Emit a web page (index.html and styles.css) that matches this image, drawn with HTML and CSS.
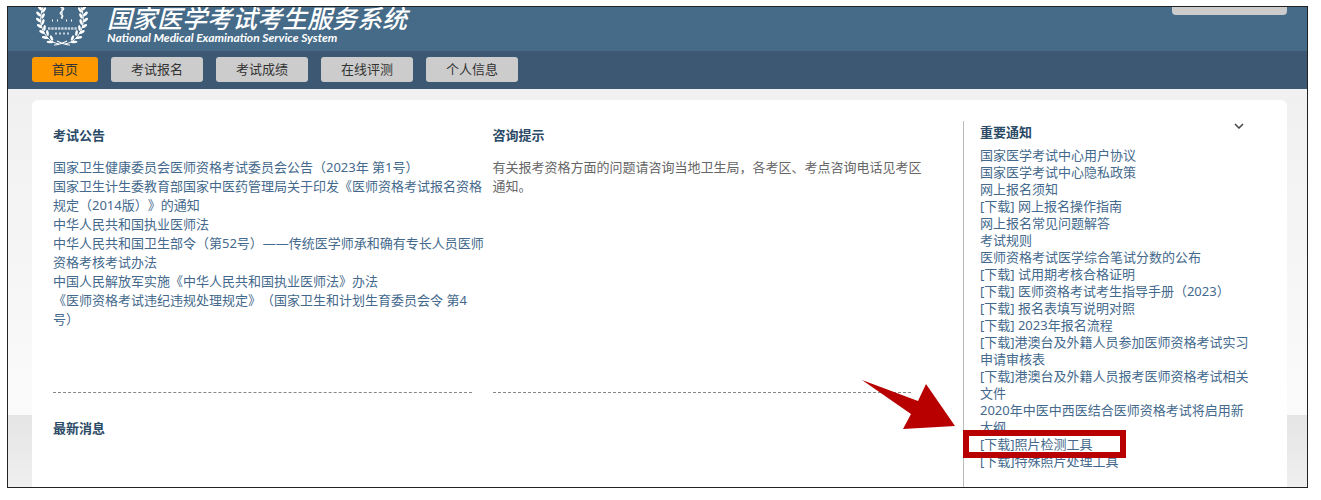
FILE: index.html
```html
<!DOCTYPE html>
<html lang="zh-CN">
<head>
<meta charset="utf-8">
<title>国家医学考试考生服务系统</title>
<link rel="stylesheet" href="styles.css">
</head>
<body>
<div class="frame">
  <header class="banner">
    <svg class="emblem" viewBox="0 0 52 40" aria-hidden="true">
      <defs>
        <g id="branch" fill="#fff">
          <path d="M7 0C3 10 4 22 11 30C14 34 18 36 23 37" fill="none" stroke="#fff" stroke-width="1"/>
          <ellipse cx="4" cy="1" rx="3" ry="1.4" transform="rotate(50 4 1)"/>
          <ellipse cx="8" cy="3" rx="3" ry="1.3" transform="rotate(-55 8 3)"/>
          <ellipse cx="2.5" cy="7" rx="3" ry="1.4" transform="rotate(45 2.5 7)"/>
          <ellipse cx="7" cy="9" rx="3" ry="1.3" transform="rotate(-60 7 9)"/>
          <ellipse cx="2.5" cy="13" rx="3" ry="1.4" transform="rotate(40 2.5 13)"/>
          <ellipse cx="7" cy="15" rx="3" ry="1.3" transform="rotate(-70 7 15)"/>
          <ellipse cx="3.5" cy="19" rx="3" ry="1.4" transform="rotate(32 3.5 19)"/>
          <ellipse cx="8.5" cy="21" rx="3" ry="1.3" transform="rotate(-82 8.5 21)"/>
          <ellipse cx="6" cy="25" rx="3" ry="1.4" transform="rotate(25 6 25)"/>
          <ellipse cx="11.5" cy="26" rx="3" ry="1.3" transform="rotate(80 11.5 26)"/>
          <ellipse cx="9" cy="30.5" rx="3.2" ry="1.4" transform="rotate(12 9 30.5)"/>
          <ellipse cx="15.5" cy="31" rx="2.8" ry="1.3" transform="rotate(65 15.5 31)"/>
          <ellipse cx="14" cy="35" rx="3.4" ry="1.3" transform="rotate(4 14 35)"/>
          <path d="M18 38C23 38 27 36 31 34" fill="none" stroke="#fff" stroke-width="1.2"/>
        </g>
      </defs>
      <use href="#branch"/>
      <use href="#branch" transform="translate(52 0) scale(-1 1)"/>
      <path d="M24 0c4 0 5 2 2 4s-2 3 0 4s0 2-1 3M26 0v12" fill="none" stroke="#fff" stroke-width="1.2"/>
      <path d="M16 13.5h1M21 13.5h1M30 13.5h1M35 13.5h1" stroke="#fff" stroke-width="2"/>
      <path d="M12 21.5h29" stroke="#c3d2de" stroke-width="2.4" stroke-dasharray="2.4 .9"/>
      <path d="M19 26.5h14" stroke="#c3d2de" stroke-width="2" stroke-dasharray="2 2"/>
    </svg>
    <div class="brand">
      <h1 class="brand-name">国家医学考试考生服务系统</h1>
      <p class="brand-sub">National Medical Examination Service System</p>
    </div>
    <button class="account" type="button">修改密码 退出</button>
  </header>

  <nav class="nav">
    <button class="tab tab-active" type="button">首页</button>
    <button class="tab" type="button">考试报名</button>
    <button class="tab" type="button">考试成绩</button>
    <button class="tab" type="button">在线评测</button>
    <button class="tab" type="button">个人信息</button>
  </nav>

  <div class="page">
    <main class="panel">
      <div class="main-area">
        <section class="block">
          <h2 class="heading">考试公告</h2>
          <ul class="list">
            <li><a href="#">国家卫生健康委员会医师资格考试委员会公告（2023年 第1号）</a></li>
            <li><a href="#">国家卫生计生委教育部国家中医药管理局关于印发《医师资格考试报名资格<br>规定（2014版）》的通知</a></li>
            <li><a href="#">中华人民共和国执业医师法</a></li>
            <li><a href="#">中华人民共和国卫生部令（第52号）——传统医学师承和确有专长人员医师<br>资格考核考试办法</a></li>
            <li><a href="#">中国人民解放军实施《中华人民共和国执业医师法》办法</a></li>
            <li><a href="#">《医师资格考试违纪违规处理规定》（国家卫生和计划生育委员会令 第4<br>号）</a></li>
          </ul>
        </section>
        <section class="block">
          <h2 class="heading">咨询提示</h2>
          <p class="hint">有关报考资格方面的问题请咨询当地卫生局，各考区、考点咨询电话见考区<br>通知。</p>
        </section>
        <section class="latest">
          <h2 class="heading">最新消息</h2>
        </section>
      </div>

      <aside class="notices">
        <div class="notices-head">
          <h2 class="heading">重要通知</h2>
          <button class="collapse" type="button" aria-label="收起">
            <svg width="10" height="6" viewBox="0 0 10 6" aria-hidden="true"><path d="M1 1l4 4l4-4" fill="none" stroke="#444" stroke-width="1.5"/></svg>
          </button>
        </div>
        <ul class="list list-dense">
          <li><a href="#">国家医学考试中心用户协议</a></li>
          <li><a href="#">国家医学考试中心隐私政策</a></li>
          <li><a href="#">网上报名须知</a></li>
          <li><a href="#">[下载] 网上报名操作指南</a></li>
          <li><a href="#">网上报名常见问题解答</a></li>
          <li><a href="#">考试规则</a></li>
          <li><a href="#">医师资格考试医学综合笔试分数的公布</a></li>
          <li><a href="#">[下载] 试用期考核合格证明</a></li>
          <li><a href="#">[下载] 医师资格考试考生指导手册（2023）</a></li>
          <li><a href="#">[下载] 报名表填写说明对照</a></li>
          <li><a href="#">[下载] 2023年报名流程</a></li>
          <li><a href="#">[下载]港澳台及外籍人员参加医师资格考试实习<br>申请审核表</a></li>
          <li><a href="#">[下载]港澳台及外籍人员报考医师资格考试相关<br>文件</a></li>
          <li><a href="#">2020年中医中西医结合医师资格考试将启用新<br>大纲</a></li>
          <li class="marked"><a href="#">[下载]照片检测工具</a>
            <span class="mark-box"></span>
            <svg class="mark-arrow" width="94" height="50" viewBox="0 0 94 50" aria-hidden="true"><path d="M0 0L56 21L64 4L93 46L41 49L49 34Z" fill="#b80000"/></svg>
          </li>
          <li><a href="#">[下载]特殊照片处理工具</a></li>
        </ul>
      </aside>
    </main>
  </div>
</div>
</body>
</html>
```
FILE: styles.css
```css
* { box-sizing: border-box; }

body {
  margin: 6px 13px 11px 7px;
  background: #fff;
  color: #666;
  font-family: "Noto Sans", "Noto Sans CJK SC", sans-serif;
  font-size: 13px;
  text-spacing-trim: space-all;
}

h1, h2, p, ul { margin: 0; padding: 0; }

button { border: 0; font: inherit; color: #333; }

.frame { border: 1px solid #222; }

.banner {
  display: flex;
  align-items: flex-start;
  height: 44px;
  padding: 0 20px 0 28px;
  background: #466b88;
  overflow: hidden;
}

.emblem { width: 52px; height: 40px; flex: none; }

.brand { margin: -4px 0 0 19px; color: #fff; font-style: italic; white-space: nowrap; }

.brand-name {
  font-family: "Noto Sans CJK SC", sans-serif;
  font-size: 25px;
  font-weight: 500;
  line-height: 28px;
}

.brand-sub {
  font-family: Lato, sans-serif;
  font-size: 12px;
  font-weight: 700;
  line-height: 14px;
}

.account {
  flex: none;
  width: 115px;
  height: 25px;
  margin: -17px 0 0 auto;
  padding: 0 0 2px;
  border-radius: 4px;
  background: #ccc;
  font-size: 12px;
  line-height: 23px;
}

.nav {
  display: flex;
  gap: 13px;
  padding: 6px 24px 7px;
  background: #3c5872;
}

.tab {
  height: 25px;
  padding: 0 20px;
  border-radius: 3px;
  background: #ccc;
  line-height: 25px;
}

.tab-active { background: #f90; }

.page {
  padding: 11px 20px 0 24px;
  background:
    linear-gradient(#e5e5e5, #efefef) bottom / 100% 72px no-repeat,
    linear-gradient(#f0f0f0, #fdfdfd);
}

.panel {
  display: grid;
  grid-template-columns: minmax(0, 1fr) 324px;
  padding-top: 21px;
  border-radius: 6px 6px 0 0;
  background: #fff;
}

.main-area {
  display: grid;
  grid-template-columns: repeat(2, minmax(0, 1fr));
  grid-template-rows: 272px auto;
  column-gap: 21px;
  padding: 0 52px 0 21px;
}

.block { padding-top: 5px; border-bottom: 1px dashed #888; }

.latest { padding-top: 26px; }

.heading {
  color: #2b4a66;
  font-size: 13px;
  font-weight: 700;
  line-height: 18px;
}

.list {
  margin-top: 14px;
  list-style: none;
  line-height: 19px;
  white-space: nowrap;
}

.list a { color: #44698c; text-decoration: none; }

.hint { margin-top: 14px; line-height: 19px; white-space: nowrap; }

.notices { padding: 0 43px 17px 16px; border-left: 1px solid #bbb; }

.notices-head { display: flex; justify-content: space-between; padding-top: 2px; }

.collapse {
  display: flex;
  width: 10px;
  height: 6px;
  padding: 0;
  background: none;
}

.list-dense { margin-top: 6px; line-height: 17px; }

.marked { position: relative; }

.mark-box {
  position: absolute;
  inset: -6px auto auto -17px;
  width: 163px;
  height: 28px;
  border: 6px solid #b80000;
}

.mark-arrow { position: absolute; top: -56px; left: -118px; }
```
